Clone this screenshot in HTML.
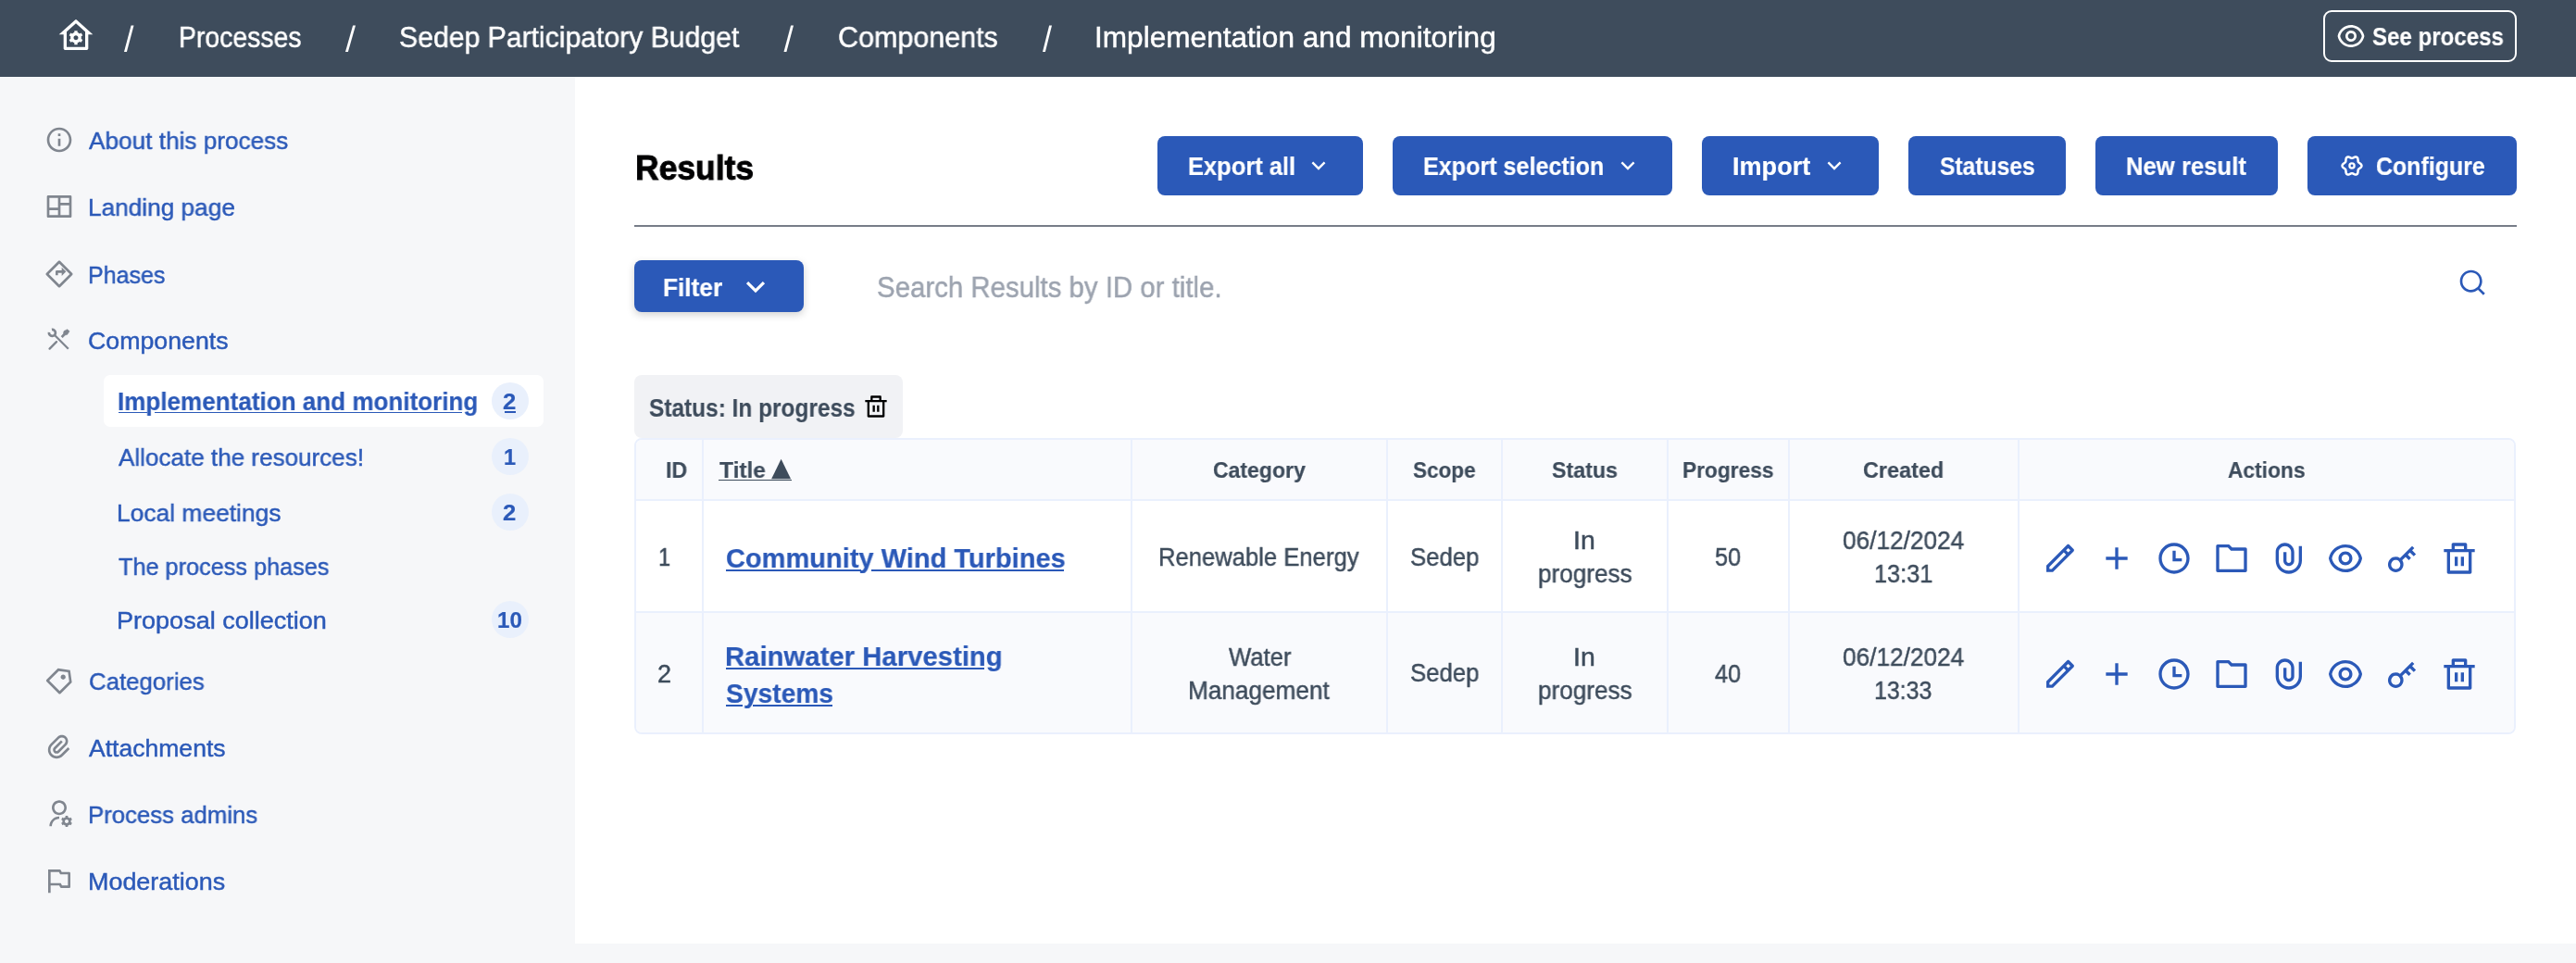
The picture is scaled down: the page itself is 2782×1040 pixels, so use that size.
<!DOCTYPE html>
<html><head><meta charset="utf-8"><title>Results</title>
<style>
html,body{margin:0;padding:0;}
body{width:2782px;height:1040px;position:relative;overflow:hidden;background:#f6f7f9;font-family:"Liberation Sans",sans-serif;}
.t{position:absolute;white-space:nowrap;line-height:90px;transform-origin:0 0;will-change:transform;}
svg{display:block}
</style></head><body>
<div style="position:absolute;left:621.00px;top:83.00px;width:2161.00px;height:936.00px;background:#fff"></div><div style="position:absolute;left:0.00px;top:0.00px;width:2782.00px;height:83.00px;background:#3e4c5c"></div><div style="position:absolute;left:2509.00px;top:11.00px;width:209.00px;height:56.00px;border:2px solid #fff;border-radius:9px;box-sizing:border-box"></div><div style="position:absolute;left:112.00px;top:405.00px;width:475.00px;height:55.60px;background:#fff;border-radius:7px"></div><div style="position:absolute;left:531.00px;top:412.90px;width:40.00px;height:40.00px;background:#e9f0fc;border-radius:50%"></div><div style="position:absolute;left:531.00px;top:473.00px;width:40.00px;height:40.00px;background:#e9f0fc;border-radius:50%"></div><div style="position:absolute;left:531.00px;top:533.00px;width:40.00px;height:40.00px;background:#e9f0fc;border-radius:50%"></div><div style="position:absolute;left:531.00px;top:649.00px;width:40.00px;height:40.00px;background:#e9f0fc;border-radius:50%"></div><div style="position:absolute;left:1250.00px;top:147.00px;width:222.00px;height:64.00px;background:#2b59b8;border-radius:8px"></div><div style="position:absolute;left:1504.00px;top:147.00px;width:302.00px;height:64.00px;background:#2b59b8;border-radius:8px"></div><div style="position:absolute;left:1838.00px;top:147.00px;width:191.00px;height:64.00px;background:#2b59b8;border-radius:8px"></div><div style="position:absolute;left:2061.00px;top:147.00px;width:170.00px;height:64.00px;background:#2b59b8;border-radius:8px"></div><div style="position:absolute;left:2263.00px;top:147.00px;width:197.00px;height:64.00px;background:#2b59b8;border-radius:8px"></div><div style="position:absolute;left:2492.00px;top:147.00px;width:226.00px;height:64.00px;background:#2b59b8;border-radius:8px"></div><div style="position:absolute;left:685.00px;top:243.00px;width:2033.00px;height:2.00px;background:#777d88"></div><div style="position:absolute;left:685.00px;top:281.00px;width:183.00px;height:56.00px;background:#2b59b8;border-radius:8px;box-shadow:0 3px 8px rgba(0,0,0,0.18)"></div><div style="position:absolute;left:685.00px;top:405.00px;width:290.00px;height:68.00px;background:#f1f2f5;border-radius:8px"></div><div style="position:absolute;left:685.00px;top:473.00px;width:2032.00px;height:320.00px;background:#fff;border:2px solid #eaf0fd;border-radius:8px;box-sizing:border-box;overflow:hidden"></div><div style="position:absolute;left:687.00px;top:475.00px;width:2028.00px;height:64.00px;background:#f9fafd;border-radius:6px 6px 0 0"></div><div style="position:absolute;left:687.00px;top:662.00px;width:2028.00px;height:129.00px;background:#f9fafd;border-radius:0 0 6px 6px"></div><div style="position:absolute;left:687.00px;top:539.00px;width:2028.00px;height:2.00px;background:#eaf0fd"></div><div style="position:absolute;left:687.00px;top:660.00px;width:2028.00px;height:2.00px;background:#eaf0fd"></div><div style="position:absolute;left:758.00px;top:475.00px;width:2.00px;height:316.00px;background:#eaf0fd"></div><div style="position:absolute;left:1221.00px;top:475.00px;width:2.00px;height:316.00px;background:#eaf0fd"></div><div style="position:absolute;left:1496.50px;top:475.00px;width:2.00px;height:316.00px;background:#eaf0fd"></div><div style="position:absolute;left:1620.75px;top:475.00px;width:2.00px;height:316.00px;background:#eaf0fd"></div><div style="position:absolute;left:1799.75px;top:475.00px;width:2.00px;height:316.00px;background:#eaf0fd"></div><div style="position:absolute;left:1930.75px;top:475.00px;width:2.00px;height:316.00px;background:#eaf0fd"></div><div style="position:absolute;left:2178.50px;top:475.00px;width:2.00px;height:316.00px;background:#eaf0fd"></div>
<svg style="position:absolute;left:62.10px;top:18.50px" width="40" height="40" viewBox="0 0 24 24"><path fill="#fff" d="M19 21H5C4.44772 21 4 20.5523 4 20V11L1 11L11.3273 1.6115C11.7087 1.26475 12.2913 1.26475 12.6727 1.6115L23 11L20 11V20C20 20.5523 19.5523 21 19 21ZM6 19H18V9.15745L12 3.7029L6 9.15745V19ZM8.59117 13.8089C8.53198 13.5486 8.50058 13.2778 8.50058 13C8.50058 12.7222 8.53198 12.4514 8.59117 12.1911L7.59907 11.6183L8.59907 9.88625L9.59202 10.4595C9.98386 10.0906 10.4604 9.81087 10.9895 9.65262V8.5H12.9895V9.65262C13.5186 9.81087 13.9951 10.0906 14.387 10.4595L15.3799 9.88625L16.3799 11.6183L15.3878 12.1911C15.447 12.4514 15.4784 12.7222 15.4784 13C15.4784 13.2778 15.447 13.5486 15.3878 13.8089L16.3799 14.3817L15.3799 16.1137L14.387 15.5405C13.9951 15.9094 13.5186 16.1891 12.9895 16.3474V17.5H10.9895V16.3474C10.4604 16.1891 9.98386 15.9094 9.59202 15.5405L8.59907 16.1137L7.59907 14.3817L8.59117 13.8089ZM11.9895 14.5C12.8179 14.5 13.4895 13.8284 13.4895 13C13.4895 12.1716 12.8179 11.5 11.9895 11.5C11.1611 11.5 10.4895 12.1716 10.4895 13C10.4895 13.8284 11.1611 14.5 11.9895 14.5Z"/></svg><svg style="position:absolute;left:0;top:0;overflow:visible" width="1" height="1"><polygon fill="#fff" points="134.00,56 136.90,56 144.50,27.5 141.60,27.5"/><polygon fill="#fff" points="373.00,56 375.90,56 384.00,27.5 381.10,27.5"/><polygon fill="#fff" points="846.50,56 849.40,56 857.00,27.5 854.10,27.5"/><polygon fill="#fff" points="1126.00,56 1128.90,56 1136.00,27.5 1133.10,27.5"/></svg><svg style="position:absolute;left:2523.40px;top:23.00px" width="32" height="32" viewBox="0 0 24 24"><path fill="#fff" d="M12.0003 3C17.3924 3 21.8784 6.87976 22.8189 12C21.8784 17.1202 17.3924 21 12.0003 21C6.60812 21 2.12215 17.1202 1.18164 12C2.12215 6.87976 6.60812 3 12.0003 3ZM12.0003 19C16.2359 19 19.8603 16.052 20.7777 12C19.8603 7.94803 16.2359 5 12.0003 5C7.7646 5 4.14022 7.94803 3.22278 12C4.14022 16.052 7.7646 19 12.0003 19ZM12.0003 16.5C9.51498 16.5 7.50026 14.4853 7.50026 12C7.50026 9.51472 9.51498 7.5 12.0003 7.5C14.4855 7.5 16.5003 9.51472 16.5003 12C16.5003 14.4853 14.4855 16.5 12.0003 16.5ZM12.0003 14.5C13.381 14.5 14.5003 13.3807 14.5003 12C14.5003 10.6193 13.381 9.5 12.0003 9.5C10.6196 9.5 9.50026 10.6193 9.50026 12C9.50026 13.3807 10.6196 14.5 12.0003 14.5Z"/></svg><svg style="position:absolute;left:48.00px;top:134.75px" width="32" height="32" viewBox="0 0 24 24"><path fill="#80868f" d="M12 22C6.47715 22 2 17.5228 2 12C2 6.47715 6.47715 2 12 2C17.5228 2 22 6.47715 22 12C22 17.5228 17.5228 22 12 22ZM12 20C16.4183 20 20 16.4183 20 12C20 7.58172 16.4183 4 12 4C7.58172 4 4 7.58172 4 12C4 16.4183 7.58172 20 12 20ZM11 7H13V9H11V7ZM11 11H13V17H11V11Z"/></svg><svg style="position:absolute;left:48.00px;top:207.00px" width="32" height="32" viewBox="0 0 24 24"><path fill="#80868f" d="M22 20C22 20.5523 21.5523 21 21 21H3C2.44772 21 2 20.5523 2 20V4C2 3.44772 2.44772 3 3 3H21C21.5523 3 22 3.44772 22 4V20ZM11 15H4V19H11V15ZM20 11H13V19H20V11ZM11 5H4V13H11V5ZM20 5H13V9H20V5Z"/></svg><svg style="position:absolute;left:48.00px;top:279.50px" width="32" height="32" viewBox="0 0 24 24"><path fill="#80868f" d="M9 10.0001V13.0001H11V11.0001H14V13.5001L17.5 10.0001L14 6.50006V9.00006H10C9.44772 9.00006 9 9.44778 9 10.0001ZM12.7071 1.39294L22.6066 11.2924C22.9971 11.683 22.9971 12.3161 22.6066 12.7067L12.7071 22.6062C12.3166 22.9967 11.6834 22.9967 11.2929 22.6062L1.39339 12.7067C1.00287 12.3161 1.00287 11.683 1.39339 11.2924L11.2929 1.39294C11.6834 1.00241 12.3166 1.00241 12.7071 1.39294ZM3.51471 11.9996L12 20.4848L20.4853 11.9996L12 3.51428L3.51471 11.9996Z"/></svg><svg style="position:absolute;left:48.00px;top:719.00px" width="32" height="32" viewBox="0 0 24 24"><path fill="#80868f" d="M10.9042 2.10025L20.8037 3.51446L22.2179 13.414L13.0255 22.6063C12.635 22.9969 12.0019 22.9969 11.6113 22.6063L1.71184 12.7069C1.32131 12.3163 1.32131 11.6832 1.71184 11.2926L10.9042 2.10025ZM11.6113 4.22157L3.83316 11.9997L12.3184 20.485L20.0966 12.7069L19.036 5.28223L11.6113 4.22157ZM13.7327 10.5855C12.9516 9.80448 12.9516 8.53815 13.7327 7.7571C14.5137 6.97606 15.78 6.97606 16.5611 7.7571C17.3421 8.53815 17.3421 9.80448 16.5611 10.5855C15.78 11.3666 14.5137 11.3666 13.7327 10.5855Z"/></svg><svg style="position:absolute;left:48.00px;top:791.00px" width="32" height="32" viewBox="0 0 24 24"><path fill="#80868f" d="M14.8287 7.75737L9.1718 13.4142C8.78127 13.8047 8.78127 14.4379 9.1718 14.8284C9.56232 15.219 10.1955 15.219 10.586 14.8284L16.2429 9.17158C17.4144 8.00001 17.4144 6.10052 16.2429 4.92894C15.0713 3.75737 13.1718 3.75737 12.0002 4.92894L6.34337 10.5858C4.39075 12.5384 4.39075 15.7042 6.34337 17.6569C8.29599 19.6095 11.4618 19.6095 13.4144 17.6569L19.0713 12L20.4855 13.4142L14.8287 19.0711C12.095 21.8047 7.66283 21.8047 4.92916 19.0711C2.19549 16.3374 2.19549 11.9053 4.92916 9.17158L10.586 3.51473C12.5386 1.56211 15.7045 1.56211 17.6571 3.51473C19.6097 5.46735 19.6097 8.63317 17.6571 10.5858L12.0002 16.2427C10.8287 17.4142 8.92916 17.4142 7.75759 16.2427C6.58601 15.0711 6.58601 13.1716 7.75759 12L13.4144 6.34316L14.8287 7.75737Z"/></svg><svg style="position:absolute;left:48.00px;top:863.00px" width="32" height="32" viewBox="0 0 24 24"><path fill="#80868f" d="M12 14V16C8.68629 16 6 18.6863 6 22H4C4 17.5817 7.58172 14 12 14ZM12 13C8.685 13 6 10.315 6 7C6 3.685 8.685 1 12 1C15.315 1 18 3.685 18 7C18 10.315 15.315 13 12 13ZM12 11C14.21 11 16 9.21 16 7C16 4.79 14.21 3 12 3C9.79 3 8 4.79 8 7C8 9.21 9.79 11 12 11ZM14.5946 18.8115C14.5327 18.5511 14.5 18.2794 14.5 18C14.5 17.7207 14.5327 17.449 14.5945 17.1886L13.6029 16.6161L14.6029 14.884L15.5952 15.4569C15.9883 15.0851 16.4676 14.8034 17 14.6449V13.5H19V14.6449C19.5324 14.8034 20.0116 15.0851 20.4047 15.4569L21.3971 14.8839L22.3972 16.616L21.4055 17.1885C21.4673 17.449 21.5 17.7207 21.5 18C21.5 18.2793 21.4673 18.551 21.4055 18.8114L22.3972 19.3839L21.3972 21.116L20.4048 20.5431C20.0117 20.9149 19.5325 21.1966 19.0001 21.3551V22.5H17.0001V21.3551C16.4677 21.1966 15.9884 20.9149 15.5953 20.543L14.603 21.1159L13.6029 19.3839L14.5946 18.8115ZM18 19.5C18.8284 19.5 19.5 18.8284 19.5 18C19.5 17.1716 18.8284 16.5 18 16.5C17.1716 16.5 16.5 17.1716 16.5 18C16.5 18.8284 17.1716 19.5 18 19.5Z"/></svg><svg style="position:absolute;left:48.00px;top:935.00px" width="32" height="32" viewBox="0 0 24 24"><path fill="#80868f" d="M5 16V22H3V3H12.382C12.7607 3 13.107 3.214 13.2764 3.55279L14 5H20C20.5523 5 21 5.44772 21 6V17C21 17.5523 20.5523 18 20 18H13.618C13.2393 18 12.893 17.786 12.7236 17.4472L12 16H5ZM5 5V14H13.2361L14.2361 16H19V7H12.7639L11.7639 5H5Z"/></svg><svg style="position:absolute;left:0;top:0;overflow:visible" width="1" height="1"><path d="M55.91,355.93 A3.5,3.5 0 1 1 52.93,358.91" fill="none" stroke="#80868f" stroke-width="2.7"/><line x1="59.3" y1="362.3" x2="73.8" y2="376.8" stroke="#80868f" stroke-width="2.3"/><polygon fill="#80868f" stroke="#80868f" stroke-width="0.6" stroke-linejoin="round" points="69.0,357.6 72.9,355.7 75.0,357.8 72.7,361.3 70.3,361.9 67.7,364.7 66.0,363.2 68.4,360.6"/><line x1="53.6" y1="376.6" x2="61.0" y2="369.2" stroke="#80868f" stroke-width="2.4" stroke-linecap="round"/></svg><svg style="position:absolute;left:1410.00px;top:165.40px" width="28" height="28" viewBox="0 0 24 24"><path fill="#fff" d="M11.9997 13.1714L16.9495 8.22168L18.3637 9.63589L11.9997 15.9999L5.63574 9.63589L7.04996 8.22168L11.9997 13.1714Z"/></svg><svg style="position:absolute;left:1744.00px;top:165.40px" width="28" height="28" viewBox="0 0 24 24"><path fill="#fff" d="M11.9997 13.1714L16.9495 8.22168L18.3637 9.63589L11.9997 15.9999L5.63574 9.63589L7.04996 8.22168L11.9997 13.1714Z"/></svg><svg style="position:absolute;left:1967.00px;top:165.40px" width="28" height="28" viewBox="0 0 24 24"><path fill="#fff" d="M11.9997 13.1714L16.9495 8.22168L18.3637 9.63589L11.9997 15.9999L5.63574 9.63589L7.04996 8.22168L11.9997 13.1714Z"/></svg><svg style="position:absolute;left:797.00px;top:290.55px" width="38" height="38" viewBox="0 0 24 24"><path fill="#fff" d="M11.9997 13.1714L16.9495 8.22168L18.3637 9.63589L11.9997 15.9999L5.63574 9.63589L7.04996 8.22168L11.9997 13.1714Z"/></svg><svg style="position:absolute;left:0;top:0;overflow:visible" width="1" height="1"><polygon points="2550.46,179.00 2550.43,179.37 2550.33,179.74 2550.17,180.09 2549.95,180.43 2549.69,180.74 2549.39,181.04 2549.06,181.31 2548.72,181.56 2548.39,181.78 2548.06,182.00 2547.76,182.20 2547.48,182.40 2547.24,182.61 2547.04,182.83 2546.89,183.06 2546.77,183.32 2546.68,183.60 2546.63,183.92 2546.59,184.26 2546.57,184.63 2546.55,185.03 2546.53,185.44 2546.49,185.86 2546.42,186.28 2546.32,186.70 2546.19,187.09 2546.01,187.45 2545.79,187.77 2545.53,188.04 2545.23,188.26 2544.90,188.41 2544.54,188.51 2544.16,188.54 2543.76,188.52 2543.36,188.44 2542.97,188.32 2542.57,188.17 2542.20,188.00 2541.83,187.81 2541.49,187.63 2541.16,187.46 2540.86,187.32 2540.56,187.21 2540.28,187.15 2540.00,187.12 2539.72,187.15 2539.44,187.21 2539.14,187.32 2538.84,187.46 2538.51,187.63 2538.17,187.81 2537.80,188.00 2537.43,188.17 2537.03,188.32 2536.64,188.44 2536.24,188.52 2535.84,188.54 2535.46,188.51 2535.10,188.41 2534.77,188.26 2534.47,188.04 2534.21,187.77 2533.99,187.45 2533.81,187.09 2533.68,186.70 2533.58,186.28 2533.51,185.86 2533.47,185.44 2533.45,185.03 2533.43,184.63 2533.41,184.26 2533.37,183.92 2533.32,183.60 2533.23,183.32 2533.11,183.06 2532.96,182.83 2532.76,182.61 2532.52,182.40 2532.24,182.20 2531.94,182.00 2531.61,181.78 2531.28,181.56 2530.94,181.31 2530.61,181.04 2530.31,180.74 2530.05,180.43 2529.83,180.09 2529.67,179.74 2529.57,179.37 2529.54,179.00 2529.57,178.63 2529.67,178.26 2529.83,177.91 2530.05,177.57 2530.31,177.26 2530.61,176.96 2530.94,176.69 2531.28,176.44 2531.61,176.22 2531.94,176.00 2532.24,175.80 2532.52,175.60 2532.76,175.39 2532.96,175.17 2533.11,174.94 2533.23,174.68 2533.32,174.40 2533.37,174.08 2533.41,173.74 2533.43,173.37 2533.45,172.97 2533.47,172.56 2533.51,172.14 2533.58,171.72 2533.68,171.30 2533.81,170.91 2533.99,170.55 2534.21,170.23 2534.47,169.96 2534.77,169.74 2535.10,169.59 2535.46,169.49 2535.84,169.46 2536.24,169.48 2536.64,169.56 2537.03,169.68 2537.43,169.83 2537.80,170.00 2538.17,170.19 2538.51,170.37 2538.84,170.54 2539.14,170.68 2539.44,170.79 2539.72,170.85 2540.00,170.88 2540.28,170.85 2540.56,170.79 2540.86,170.68 2541.16,170.54 2541.49,170.37 2541.83,170.19 2542.20,170.00 2542.57,169.83 2542.97,169.68 2543.36,169.56 2543.76,169.48 2544.16,169.46 2544.54,169.49 2544.90,169.59 2545.23,169.74 2545.53,169.96 2545.79,170.23 2546.01,170.55 2546.19,170.91 2546.32,171.30 2546.42,171.72 2546.49,172.14 2546.53,172.56 2546.55,172.97 2546.57,173.37 2546.59,173.74 2546.63,174.08 2546.68,174.40 2546.77,174.68 2546.89,174.94 2547.04,175.17 2547.24,175.39 2547.48,175.60 2547.76,175.80 2548.06,176.00 2548.39,176.22 2548.72,176.44 2549.06,176.69 2549.39,176.96 2549.69,177.26 2549.95,177.57 2550.17,177.91 2550.33,178.26 2550.43,178.63 2550.46,179.00" fill="none" stroke="#fff" stroke-width="2.5" stroke-linejoin="round"/><circle cx="2540" cy="179" r="2.6" fill="none" stroke="#fff" stroke-width="2.3"/></svg><svg style="position:absolute;left:2654.00px;top:288.80px" width="32" height="32" viewBox="0 0 24 24"><path fill="#2b59b8" d="M18.031 16.6168L22.3137 20.8995L20.8995 22.3137L16.6168 18.031C15.0769 19.263 13.124 20 11 20C6.032 20 2 15.968 2 11C2 6.032 6.032 2 11 2C15.968 2 20 6.032 20 11C20 13.124 19.263 15.0769 18.031 16.6168ZM16.0247 15.8748C17.2475 14.6146 18 12.8956 18 11C18 7.1325 14.8675 4 11 4C7.1325 4 4 7.1325 4 11C4 14.8675 7.1325 18 11 18C12.8956 18 14.6146 17.2475 15.8748 16.0247L16.0247 15.8748Z"/></svg><svg style="position:absolute;left:931.50px;top:425.00px" width="28" height="28" viewBox="0 0 24 24"><path fill="#000" d="M17 6H22V8H20V21C20 21.5523 19.5523 22 19 22H5C4.44772 22 4 21.5523 4 21V8H2V6H7V3C7 2.44772 7.44772 2 8 2H16C16.5523 2 17 2.44772 17 3V6ZM18 8H6V20H18V8ZM9 11H11V17H9V11ZM13 11H15V17H13V11ZM9 4V6H15V4H9Z"/></svg><svg style="position:absolute;left:0;top:0;overflow:visible" width="1" height="1"><polygon fill="#3e4c5c" points="833.1,517.3 854.1,517.3 843.6,495.8"/></svg><svg style="position:absolute;left:2204.60px;top:582.75px" width="40" height="40" viewBox="0 0 24 24"><path fill="#2b59b8" d="M15.7279 9.57629L14.3137 8.16207L5 17.4758V18.8901H6.41421L15.7279 9.57629ZM17.1421 8.16207L18.5563 6.74786L17.1421 5.33365L15.7279 6.74786L17.1421 8.16207ZM7.24264 20.8901H3V16.6474L16.435 3.21233C16.8256 2.8218 17.4587 2.8218 17.8492 3.21233L20.6777 6.04075C21.0682 6.43128 21.0682 7.06444 20.6777 7.45497L7.24264 20.8901Z"/></svg><svg style="position:absolute;left:2265.90px;top:582.75px" width="40" height="40" viewBox="0 0 24 24"><path fill="#2b59b8" d="M11 11V5H13V11H19V13H13V19H11V13H5V11H11Z"/></svg><svg style="position:absolute;left:2327.75px;top:582.75px" width="40" height="40" viewBox="0 0 24 24"><path fill="#2b59b8" d="M12 22C6.47715 22 2 17.5228 2 12C2 6.47715 6.47715 2 12 2C17.5228 2 22 6.47715 22 12C22 17.5228 17.5228 22 12 22ZM12 20C16.4183 20 20 16.4183 20 12C20 7.58172 16.4183 4 12 4C7.58172 4 4 7.58172 4 12C4 16.4183 7.58172 20 12 20ZM13 12H17V14H11V7H13V12Z"/></svg><svg style="position:absolute;left:2389.90px;top:582.75px" width="40" height="40" viewBox="0 0 24 24"><path fill="#2b59b8" d="M4 5V19H20V7H11.5858L9.58579 5H4ZM12.4142 5H21C21.5523 5 22 5.44772 22 6V20C22 20.5523 21.5523 21 21 21H3C2.44772 21 2 20.5523 2 20V4C2 3.44772 2.44772 3 3 3H10.4142L12.4142 5Z"/></svg><svg style="position:absolute;left:2450.90px;top:582.75px" width="40" height="40" viewBox="0 0 24 24"><path fill="#2b59b8" d="M14 13.5V8C14 5.79086 12.2091 4 10 4C7.79086 4 6 5.79086 6 8V13.5C6 17.0899 8.91015 20 12.5 20C16.0899 20 19 17.0899 19 13.5V4H21V13.5C21 18.1944 17.1944 22 12.5 22C7.80558 22 4 18.1944 4 13.5V8C4 4.68629 6.68629 2 10 2C13.3137 2 16 4.68629 16 8V13.5C16 15.433 14.433 17 12.5 17C10.567 17 9 15.433 9 13.5V8H11V13.5C11 14.3284 11.6716 15 12.5 15C13.3284 15 14 14.3284 14 13.5Z"/></svg><svg style="position:absolute;left:2512.75px;top:582.75px" width="40" height="40" viewBox="0 0 24 24"><path fill="#2b59b8" d="M12.0003 3C17.3924 3 21.8784 6.87976 22.8189 12C21.8784 17.1202 17.3924 21 12.0003 21C6.60812 21 2.12215 17.1202 1.18164 12C2.12215 6.87976 6.60812 3 12.0003 3ZM12.0003 19C16.2359 19 19.8603 16.052 20.7777 12C19.8603 7.94803 16.2359 5 12.0003 5C7.7646 5 4.14022 7.94803 3.22278 12C4.14022 16.052 7.7646 19 12.0003 19ZM12.0003 16.5C9.51498 16.5 7.50026 14.4853 7.50026 12C7.50026 9.51472 9.51498 7.5 12.0003 7.5C14.4855 7.5 16.5003 9.51472 16.5003 12C16.5003 14.4853 14.4855 16.5 12.0003 16.5ZM12.0003 14.5C13.381 14.5 14.5003 13.3807 14.5003 12C14.5003 10.6193 13.381 9.5 12.0003 9.5C10.6196 9.5 9.50026 10.6193 9.50026 12C9.50026 13.3807 10.6196 14.5 12.0003 14.5Z"/></svg><svg style="position:absolute;left:2574.00px;top:582.75px" width="40" height="40" viewBox="0 0 24 24"><path fill="#2b59b8" d="M10.7577 11.8281L18.6066 3.97919L20.0208 5.3934L18.6066 6.80761L21.0815 9.28249L19.6673 10.6967L17.1924 8.22183L15.7782 9.63604L17.8995 11.7574L16.4853 13.1716L14.364 11.0503L12.1719 13.2423C13.4581 15.1837 13.246 17.8251 11.5355 19.5355C9.58291 21.4882 6.41709 21.4882 4.46447 19.5355C2.51184 17.5829 2.51184 14.4171 4.46447 12.4645C6.17493 10.754 8.81633 10.5419 10.7577 11.8281ZM10.1213 18.1213C11.2929 16.9497 11.2929 15.0503 10.1213 13.8787C8.94975 12.7071 7.05025 12.7071 5.87868 13.8787C4.70711 15.0503 4.70711 16.9497 5.87868 18.1213C7.05025 19.2929 8.94975 19.2929 10.1213 18.1213Z"/></svg><svg style="position:absolute;left:2635.90px;top:582.75px" width="40" height="40" viewBox="0 0 24 24"><path fill="#2b59b8" d="M17 6H22V8H20V21C20 21.5523 19.5523 22 19 22H5C4.44772 22 4 21.5523 4 21V8H2V6H7V3C7 2.44772 7.44772 2 8 2H16C16.5523 2 17 2.44772 17 3V6ZM18 8H6V20H18V8ZM9 11H11V17H9V11ZM13 11H15V17H13V11ZM9 4V6H15V4H9Z"/></svg><svg style="position:absolute;left:2204.60px;top:708.40px" width="40" height="40" viewBox="0 0 24 24"><path fill="#2b59b8" d="M15.7279 9.57629L14.3137 8.16207L5 17.4758V18.8901H6.41421L15.7279 9.57629ZM17.1421 8.16207L18.5563 6.74786L17.1421 5.33365L15.7279 6.74786L17.1421 8.16207ZM7.24264 20.8901H3V16.6474L16.435 3.21233C16.8256 2.8218 17.4587 2.8218 17.8492 3.21233L20.6777 6.04075C21.0682 6.43128 21.0682 7.06444 20.6777 7.45497L7.24264 20.8901Z"/></svg><svg style="position:absolute;left:2265.90px;top:708.40px" width="40" height="40" viewBox="0 0 24 24"><path fill="#2b59b8" d="M11 11V5H13V11H19V13H13V19H11V13H5V11H11Z"/></svg><svg style="position:absolute;left:2327.75px;top:708.40px" width="40" height="40" viewBox="0 0 24 24"><path fill="#2b59b8" d="M12 22C6.47715 22 2 17.5228 2 12C2 6.47715 6.47715 2 12 2C17.5228 2 22 6.47715 22 12C22 17.5228 17.5228 22 12 22ZM12 20C16.4183 20 20 16.4183 20 12C20 7.58172 16.4183 4 12 4C7.58172 4 4 7.58172 4 12C4 16.4183 7.58172 20 12 20ZM13 12H17V14H11V7H13V12Z"/></svg><svg style="position:absolute;left:2389.90px;top:708.40px" width="40" height="40" viewBox="0 0 24 24"><path fill="#2b59b8" d="M4 5V19H20V7H11.5858L9.58579 5H4ZM12.4142 5H21C21.5523 5 22 5.44772 22 6V20C22 20.5523 21.5523 21 21 21H3C2.44772 21 2 20.5523 2 20V4C2 3.44772 2.44772 3 3 3H10.4142L12.4142 5Z"/></svg><svg style="position:absolute;left:2450.90px;top:708.40px" width="40" height="40" viewBox="0 0 24 24"><path fill="#2b59b8" d="M14 13.5V8C14 5.79086 12.2091 4 10 4C7.79086 4 6 5.79086 6 8V13.5C6 17.0899 8.91015 20 12.5 20C16.0899 20 19 17.0899 19 13.5V4H21V13.5C21 18.1944 17.1944 22 12.5 22C7.80558 22 4 18.1944 4 13.5V8C4 4.68629 6.68629 2 10 2C13.3137 2 16 4.68629 16 8V13.5C16 15.433 14.433 17 12.5 17C10.567 17 9 15.433 9 13.5V8H11V13.5C11 14.3284 11.6716 15 12.5 15C13.3284 15 14 14.3284 14 13.5Z"/></svg><svg style="position:absolute;left:2512.75px;top:708.40px" width="40" height="40" viewBox="0 0 24 24"><path fill="#2b59b8" d="M12.0003 3C17.3924 3 21.8784 6.87976 22.8189 12C21.8784 17.1202 17.3924 21 12.0003 21C6.60812 21 2.12215 17.1202 1.18164 12C2.12215 6.87976 6.60812 3 12.0003 3ZM12.0003 19C16.2359 19 19.8603 16.052 20.7777 12C19.8603 7.94803 16.2359 5 12.0003 5C7.7646 5 4.14022 7.94803 3.22278 12C4.14022 16.052 7.7646 19 12.0003 19ZM12.0003 16.5C9.51498 16.5 7.50026 14.4853 7.50026 12C7.50026 9.51472 9.51498 7.5 12.0003 7.5C14.4855 7.5 16.5003 9.51472 16.5003 12C16.5003 14.4853 14.4855 16.5 12.0003 16.5ZM12.0003 14.5C13.381 14.5 14.5003 13.3807 14.5003 12C14.5003 10.6193 13.381 9.5 12.0003 9.5C10.6196 9.5 9.50026 10.6193 9.50026 12C9.50026 13.3807 10.6196 14.5 12.0003 14.5Z"/></svg><svg style="position:absolute;left:2574.00px;top:708.40px" width="40" height="40" viewBox="0 0 24 24"><path fill="#2b59b8" d="M10.7577 11.8281L18.6066 3.97919L20.0208 5.3934L18.6066 6.80761L21.0815 9.28249L19.6673 10.6967L17.1924 8.22183L15.7782 9.63604L17.8995 11.7574L16.4853 13.1716L14.364 11.0503L12.1719 13.2423C13.4581 15.1837 13.246 17.8251 11.5355 19.5355C9.58291 21.4882 6.41709 21.4882 4.46447 19.5355C2.51184 17.5829 2.51184 14.4171 4.46447 12.4645C6.17493 10.754 8.81633 10.5419 10.7577 11.8281ZM10.1213 18.1213C11.2929 16.9497 11.2929 15.0503 10.1213 13.8787C8.94975 12.7071 7.05025 12.7071 5.87868 13.8787C4.70711 15.0503 4.70711 16.9497 5.87868 18.1213C7.05025 19.2929 8.94975 19.2929 10.1213 18.1213Z"/></svg><svg style="position:absolute;left:2635.90px;top:708.40px" width="40" height="40" viewBox="0 0 24 24"><path fill="#2b59b8" d="M17 6H22V8H20V21C20 21.5523 19.5523 22 19 22H5C4.44772 22 4 21.5523 4 21V8H2V6H7V3C7 2.44772 7.44772 2 8 2H16C16.5523 2 17 2.44772 17 3V6ZM18 8H6V20H18V8ZM9 11H11V17H9V11ZM13 11H15V17H13V11ZM9 4V6H15V4H9Z"/></svg>
<div class="t" style="left:193.17px;top:-4.00px;font-size:31.0px;font-weight:400;color:#ffffff;transform:scaleX(0.9155);-webkit-text-stroke:0.45px #ffffff;">Processes</div><div class="t" style="left:431.05px;top:-4.00px;font-size:31.0px;font-weight:400;color:#ffffff;transform:scaleX(0.9733);-webkit-text-stroke:0.45px #ffffff;">Sedep Participatory Budget</div><div class="t" style="left:904.53px;top:-4.00px;font-size:31.0px;font-weight:400;color:#ffffff;transform:scaleX(0.9827);-webkit-text-stroke:0.45px #ffffff;">Components</div><div class="t" style="left:1181.94px;top:-4.00px;font-size:31.0px;font-weight:400;color:#ffffff;transform:scaleX(1.0190);-webkit-text-stroke:0.45px #ffffff;">Implementation and monitoring</div><div class="t" style="left:2562.11px;top:-5.00px;font-size:27.09px;font-weight:700;color:#ffffff;transform:scaleX(0.8892);-webkit-text-stroke:0.2px #ffffff;">See process</div><div class="t" style="left:96.00px;top:106.75px;font-size:26.56px;font-weight:400;color:#2b59b8;transform:scaleX(0.9862);-webkit-text-stroke:0.45px #2b59b8;">About this process</div><div class="t" style="left:95.03px;top:179.00px;font-size:26.56px;font-weight:400;color:#2b59b8;transform:scaleX(0.9873);-webkit-text-stroke:0.45px #2b59b8;">Landing page</div><div class="t" style="left:95.12px;top:251.50px;font-size:26.56px;font-weight:400;color:#2b59b8;transform:scaleX(0.9419);-webkit-text-stroke:0.45px #2b59b8;">Phases</div><div class="t" style="left:94.99px;top:323.00px;font-size:26.56px;font-weight:400;color:#2b59b8;transform:scaleX(1.0067);-webkit-text-stroke:0.45px #2b59b8;">Components</div><div class="t" style="left:126.80px;top:389.00px;font-size:27.43px;font-weight:700;color:#2b59b8;transform:scaleX(0.9500);-webkit-text-stroke:0.2px #2b59b8;">Implementation and monitoring</div><div style="position:absolute;left:128.10px;top:445.00px;width:31.10px;height:1.40px;background:#2b59b8"></div><div style="position:absolute;left:167.00px;top:445.00px;width:331.90px;height:1.40px;background:#2b59b8"></div><div class="t" style="left:128.00px;top:448.50px;font-size:26.56px;font-weight:400;color:#2b59b8;transform:scaleX(0.9813);-webkit-text-stroke:0.45px #2b59b8;">Allocate the resources!</div><div class="t" style="left:126.01px;top:508.50px;font-size:26.56px;font-weight:400;color:#2b59b8;transform:scaleX(0.9943);-webkit-text-stroke:0.45px #2b59b8;">Local meetings</div><div class="t" style="left:128.05px;top:567.00px;font-size:26.56px;font-weight:400;color:#2b59b8;transform:scaleX(0.9515);-webkit-text-stroke:0.45px #2b59b8;">The process phases</div><div class="t" style="left:125.96px;top:625.00px;font-size:26.56px;font-weight:400;color:#2b59b8;transform:scaleX(1.0183);-webkit-text-stroke:0.45px #2b59b8;">Proposal collection</div><div class="t" style="left:95.53px;top:691.00px;font-size:26.56px;font-weight:400;color:#2b59b8;transform:scaleX(0.9722);-webkit-text-stroke:0.45px #2b59b8;">Categories</div><div class="t" style="left:96.00px;top:763.00px;font-size:26.56px;font-weight:400;color:#2b59b8;transform:scaleX(1.0000);-webkit-text-stroke:0.45px #2b59b8;">Attachments</div><div class="t" style="left:95.06px;top:835.00px;font-size:26.56px;font-weight:400;color:#2b59b8;transform:scaleX(0.9704);-webkit-text-stroke:0.45px #2b59b8;">Process admins</div><div class="t" style="left:94.97px;top:907.00px;font-size:26.56px;font-weight:400;color:#2b59b8;transform:scaleX(1.0140);-webkit-text-stroke:0.45px #2b59b8;">Moderations</div><div class="t" style="left:543.39px;top:389.20px;font-size:23.17px;font-weight:700;color:#2b59b8;transform:scaleX(1.1091);-webkit-text-stroke:0.2px #2b59b8;">2</div><div style="position:absolute;left:544.50px;top:444.20px;width:12.20px;height:1.40px;background:#2b59b8"></div><div class="t" style="left:544.08px;top:449.20px;font-size:23.17px;font-weight:700;color:#2b59b8;transform:scaleX(1.0182);-webkit-text-stroke:0.2px #2b59b8;">1</div><div class="t" style="left:543.39px;top:509.00px;font-size:23.17px;font-weight:700;color:#2b59b8;transform:scaleX(1.1091);-webkit-text-stroke:0.2px #2b59b8;">2</div><div class="t" style="left:536.96px;top:624.70px;font-size:23.17px;font-weight:700;color:#2b59b8;transform:scaleX(1.0417);-webkit-text-stroke:0.2px #2b59b8;">10</div><div class="t" style="left:685.56px;top:136.50px;font-size:36.59px;font-weight:700;color:#020203;transform:scaleX(0.9698);-webkit-text-stroke:0.9px #020203;">Results</div><div class="t" style="left:1282.62px;top:135.00px;font-size:27.09px;font-weight:700;color:#ffffff;transform:scaleX(0.9417);-webkit-text-stroke:0.2px #ffffff;">Export all</div><div class="t" style="left:1537.14px;top:135.00px;font-size:27.09px;font-weight:700;color:#ffffff;transform:scaleX(0.9275);-webkit-text-stroke:0.2px #ffffff;">Export selection</div><div class="t" style="left:1871.00px;top:135.00px;font-size:27.09px;font-weight:700;color:#ffffff;transform:scaleX(1.0000);-webkit-text-stroke:0.2px #ffffff;">Import</div><div class="t" style="left:2095.09px;top:135.00px;font-size:27.09px;font-weight:700;color:#ffffff;transform:scaleX(0.9099);-webkit-text-stroke:0.2px #ffffff;">Statuses</div><div class="t" style="left:2296.10px;top:135.00px;font-size:27.09px;font-weight:700;color:#ffffff;transform:scaleX(0.9481);-webkit-text-stroke:0.2px #ffffff;">New result</div><div class="t" style="left:2566.08px;top:135.00px;font-size:27.09px;font-weight:700;color:#ffffff;transform:scaleX(0.9206);-webkit-text-stroke:0.2px #ffffff;">Configure</div><div class="t" style="left:716.06px;top:265.50px;font-size:27.09px;font-weight:700;color:#ffffff;transform:scaleX(0.9688);-webkit-text-stroke:0.2px #ffffff;">Filter</div><div class="t" style="left:947.30px;top:266.00px;font-size:31.0px;font-weight:400;color:#9ca3af;transform:scaleX(0.9485);-webkit-text-stroke:0.45px #9ca3af;">Search Results by ID or title.</div><div class="t" style="left:701.12px;top:395.50px;font-size:27.71px;font-weight:700;color:#3e4c5c;transform:scaleX(0.8820);-webkit-text-stroke:0.2px #3e4c5c;">Status: In progress</div><div class="t" style="left:718.52px;top:462.75px;font-size:24.72px;font-weight:700;color:#3e4c5c;transform:scaleX(0.9409);-webkit-text-stroke:0.2px #3e4c5c;">ID</div><div class="t" style="left:776.50px;top:462.75px;font-size:24.72px;font-weight:700;color:#3e4c5c;transform:scaleX(0.9920);-webkit-text-stroke:0.2px #3e4c5c;">Title</div><div style="position:absolute;left:776.00px;top:517.80px;width:79.00px;height:1.40px;background:#3e4c5c"></div><div class="t" style="left:1309.82px;top:462.75px;font-size:24.72px;font-weight:700;color:#3e4c5c;transform:scaleX(0.9316);-webkit-text-stroke:0.2px #3e4c5c;">Category</div><div class="t" style="left:1525.84px;top:462.75px;font-size:24.72px;font-weight:700;color:#3e4c5c;transform:scaleX(0.9110);-webkit-text-stroke:0.2px #3e4c5c;">Scope</div><div class="t" style="left:1675.81px;top:462.75px;font-size:24.72px;font-weight:700;color:#3e4c5c;transform:scaleX(0.9392);-webkit-text-stroke:0.2px #3e4c5c;">Status</div><div class="t" style="left:1816.91px;top:462.75px;font-size:24.72px;font-weight:700;color:#3e4c5c;transform:scaleX(0.9183);-webkit-text-stroke:0.2px #3e4c5c;">Progress</div><div class="t" style="left:2012.05px;top:462.75px;font-size:24.72px;font-weight:700;color:#3e4c5c;transform:scaleX(0.9472);-webkit-text-stroke:0.2px #3e4c5c;">Created</div><div class="t" style="left:2406.33px;top:462.75px;font-size:24.72px;font-weight:700;color:#3e4c5c;transform:scaleX(0.9213);-webkit-text-stroke:0.2px #3e4c5c;">Actions</div><div class="t" style="left:710.75px;top:557.00px;font-size:27.0px;font-weight:400;color:#3e4c5c;transform:scaleX(0.8750);-webkit-text-stroke:0.45px #3e4c5c;">1</div><div class="t" style="left:783.54px;top:557.50px;font-size:30.25px;font-weight:700;color:#2b59b8;transform:scaleX(0.9592);-webkit-text-stroke:0.2px #2b59b8;">Community Wind Turbines</div><div style="position:absolute;left:784.00px;top:615.20px;width:145.90px;height:1.90px;background:#2b59b8"></div><div style="position:absolute;left:941.00px;top:615.20px;width:208.00px;height:1.90px;background:#2b59b8"></div><div class="t" style="left:1251.10px;top:556.75px;font-size:27.0px;font-weight:400;color:#3e4c5c;transform:scaleX(0.9491);-webkit-text-stroke:0.45px #3e4c5c;">Renewable Energy</div><div class="t" style="left:1522.80px;top:556.75px;font-size:27.0px;font-weight:400;color:#3e4c5c;transform:scaleX(0.9539);-webkit-text-stroke:0.45px #3e4c5c;">Sedep</div><div class="t" style="left:1698.89px;top:539.00px;font-size:27.0px;font-weight:400;color:#3e4c5c;transform:scaleX(1.0526);-webkit-text-stroke:0.45px #3e4c5c;">In</div><div class="t" style="left:1660.56px;top:575.25px;font-size:27.0px;font-weight:400;color:#3e4c5c;transform:scaleX(0.9681);-webkit-text-stroke:0.45px #3e4c5c;">progress</div><div class="t" style="left:1852.06px;top:556.75px;font-size:27.0px;font-weight:400;color:#3e4c5c;transform:scaleX(0.9375);-webkit-text-stroke:0.45px #3e4c5c;">50</div><div class="t" style="left:1990.28px;top:538.50px;font-size:27.0px;font-weight:400;color:#3e4c5c;transform:scaleX(0.9718);-webkit-text-stroke:0.45px #3e4c5c;">06/12/2024</div><div class="t" style="left:2023.88px;top:574.75px;font-size:27.0px;font-weight:400;color:#3e4c5c;transform:scaleX(0.9375);-webkit-text-stroke:0.45px #3e4c5c;">13:31</div><div class="t" style="left:710.00px;top:682.75px;font-size:27.0px;font-weight:400;color:#3e4c5c;transform:scaleX(1.0000);-webkit-text-stroke:0.45px #3e4c5c;">2</div><div class="t" style="left:783.06px;top:664.00px;font-size:30.25px;font-weight:700;color:#2b59b8;transform:scaleX(0.9689);-webkit-text-stroke:0.2px #2b59b8;">Rainwater Harvesting</div><div style="position:absolute;left:784.00px;top:721.10px;width:279.00px;height:1.80px;background:#2b59b8"></div><div class="t" style="left:784.07px;top:704.40px;font-size:30.25px;font-weight:700;color:#2b59b8;transform:scaleX(0.9324);-webkit-text-stroke:0.2px #2b59b8;">Systems</div><div style="position:absolute;left:784.00px;top:760.90px;width:18.00px;height:1.90px;background:#2b59b8"></div><div style="position:absolute;left:813.00px;top:760.90px;width:86.00px;height:1.90px;background:#2b59b8"></div><div class="t" style="left:1327.00px;top:664.75px;font-size:27.0px;font-weight:400;color:#3e4c5c;transform:scaleX(0.9507);-webkit-text-stroke:0.45px #3e4c5c;">Water</div><div class="t" style="left:1283.06px;top:701.00px;font-size:27.0px;font-weight:400;color:#3e4c5c;transform:scaleX(0.9696);-webkit-text-stroke:0.45px #3e4c5c;">Management</div><div class="t" style="left:1522.80px;top:682.25px;font-size:27.0px;font-weight:400;color:#3e4c5c;transform:scaleX(0.9539);-webkit-text-stroke:0.45px #3e4c5c;">Sedep</div><div class="t" style="left:1698.89px;top:664.75px;font-size:27.0px;font-weight:400;color:#3e4c5c;transform:scaleX(1.0526);-webkit-text-stroke:0.45px #3e4c5c;">In</div><div class="t" style="left:1660.56px;top:701.00px;font-size:27.0px;font-weight:400;color:#3e4c5c;transform:scaleX(0.9681);-webkit-text-stroke:0.45px #3e4c5c;">progress</div><div class="t" style="left:1852.06px;top:682.75px;font-size:27.0px;font-weight:400;color:#3e4c5c;transform:scaleX(0.9375);-webkit-text-stroke:0.45px #3e4c5c;">40</div><div class="t" style="left:1990.28px;top:664.75px;font-size:27.0px;font-weight:400;color:#3e4c5c;transform:scaleX(0.9718);-webkit-text-stroke:0.45px #3e4c5c;">06/12/2024</div><div class="t" style="left:2023.90px;top:701.00px;font-size:27.0px;font-weight:400;color:#3e4c5c;transform:scaleX(0.9231);-webkit-text-stroke:0.45px #3e4c5c;">13:33</div>
</body></html>
